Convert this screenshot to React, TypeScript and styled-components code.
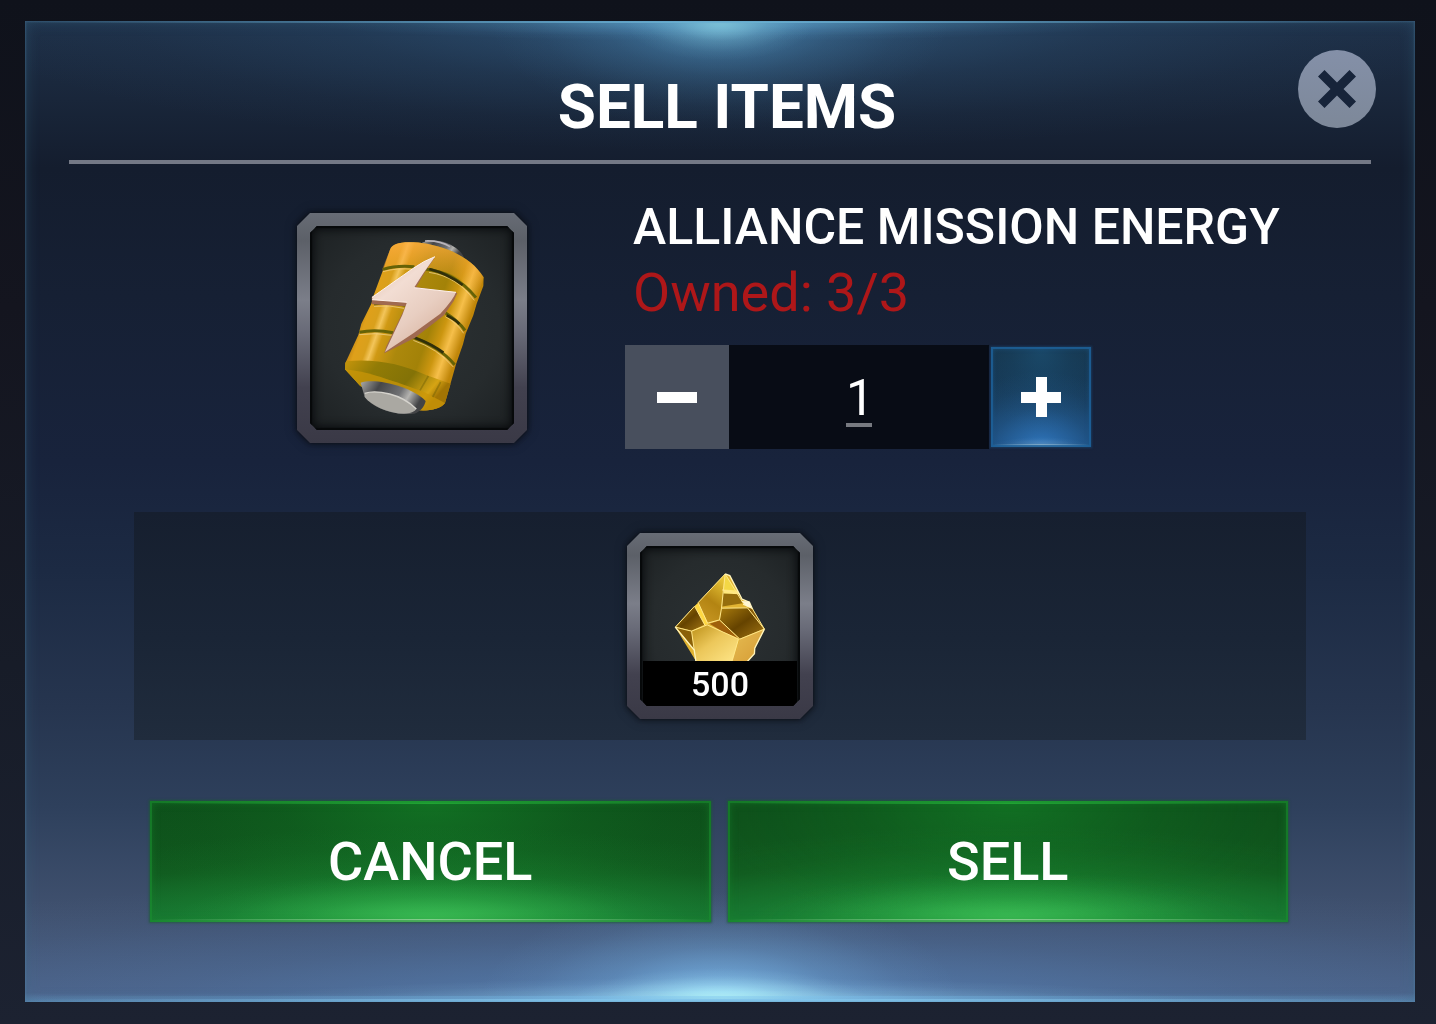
import React, { useState } from "react";
import styled, { createGlobalStyle } from "styled-components";

const OWNED = 3;
const UNIT_PRICE = 500;

const GlobalStyle = createGlobalStyle`
  *, *::before, *::after { box-sizing: border-box; }
  body {
    margin: 0;
    background: #161b27;
    color: #fff;
    font-family: Roboto, "Liberation Sans", Arial, sans-serif;
  }
  button, input { font: inherit; color: inherit; border: 0; padding: 0; margin: 0; }
  button { cursor: pointer; }
  h1, h2, p { margin: 0; }
`;

const glow = (width: number, height: number, edge: "0" | "100%", rgb: string, alpha: number) =>
  `radial-gradient(ellipse ${width}px ${height}px at 50% ${edge}, rgba(${rgb}, ${alpha}), rgba(${rgb}, ${alpha * 0.68}) 22%, rgba(${rgb}, ${alpha * 0.3}) 50%, rgba(${rgb}, ${alpha * 0.08}) 78%, rgba(${rgb}, 0))`;

const edgeLine = (height: number, edge: "0" | "100%", rgb: string, alpha: number) =>
  `linear-gradient(90deg, rgba(${rgb}, 0), rgba(${rgb}, ${alpha * 0.55}) 25%, rgba(${rgb}, ${alpha}) 50%, rgba(${rgb}, ${alpha * 0.55}) 75%, rgba(${rgb}, 0)) 0 ${edge} / 100% ${height}px no-repeat`;

const Page = styled.main`
  display: flex;
  min-height: 100vh;
  padding: 21px 21px 22px 25px;
  background: linear-gradient(180deg, #0f121b 0%, #14151f 30%, #171c28 65%, #1c2231 100%);
`;

const Dialog = styled.section`
  flex: 1;
  display: flex;
  flex-direction: column;
  background:
    ${edgeLine(2, "0", "120, 195, 230", 0.8)},
    ${edgeLine(3, "100%", "145, 215, 255", 0.9)},
    ${edgeLine(6, "100%", "130, 200, 250", 0.4)},
    ${glow(95, 40, "0", "150, 222, 235", 0.75)},
    ${glow(420, 20, "0", "110, 185, 230", 0.7)},
    ${glow(230, 110, "0", "90, 165, 215", 0.55)},
    ${glow(760, 130, "0", "60, 115, 160", 0.55)},
    ${glow(150, 34, "100%", "190, 255, 255", 1)},
    ${glow(480, 24, "100%", "160, 225, 255", 0.85)},
    ${glow(240, 110, "100%", "135, 205, 255", 0.75)},
    ${glow(1100, 130, "100%", "90, 145, 205", 0.6)},
    linear-gradient(0deg, rgba(120, 180, 225, 0.4), transparent 9px),
    linear-gradient(180deg, #1e3048 0%, #19263a 8%, #141d2e 15%, #162034 28%, #18233c 45%, #1c2a43 56%, #26354f 70%, #2e405c 80%, #40516f 91%, #4b6085 100%);
  box-shadow: inset 0 0 2px 1px rgba(90, 140, 175, 0.3), inset 0 0 14px rgba(58, 110, 140, 0.4);
`;

const Header = styled.header`
  display: grid;
  grid-template-columns: 92px 1fr 78px;
  align-items: center;
  padding: 29px 39px 32px;
`;

const Title = styled.h1`
  grid-column: 2;
  padding-top: 36px;
  font-size: 62px;
  line-height: 42px;
  font-weight: 700;
  text-align: center;
`;

const CloseButton = styled.button`
  display: grid;
  place-items: center;
  height: 78px;
  border-radius: 50%;
  background: linear-gradient(180deg, #8490a8, #7d8899);
`;

const Rule = styled.hr`
  width: calc(100% - 88px);
  height: 4px;
  margin: 0 44px;
  border: 0;
  background: #747986;
`;

const Item = styled.div`
  display: grid;
  grid-template-columns: 600fr 790fr;
  align-items: end;
  padding: 30px 0 63px;
`;

const ItemPicture = styled.div`
  display: flex;
  justify-content: flex-end;
  padding: 0 98px 6px 0;
`;

const ItemName = styled.h2`
  padding-left: 8px;
  font-size: 50px;
  line-height: 66px;
  font-weight: 500;
  white-space: nowrap;
`;

const Owned = styled.p`
  padding-left: 8px;
  margin-bottom: 19px;
  font-size: 54px;
  line-height: 66px;
  color: #ae1719;
`;

const octagon = (cut: number) => `
  clip-path: polygon(
    ${cut}px 0, calc(100% - ${cut}px) 0, 100% ${cut}px, 100% calc(100% - ${cut}px),
    calc(100% - ${cut}px) 100%, ${cut}px 100%, 0 calc(100% - ${cut}px), 0 ${cut}px
  );
`;

const FrameShadow = styled.div`
  filter: drop-shadow(0 0 2px #0b0e15) drop-shadow(0 0 5px rgba(8, 11, 18, 0.6));
`;

const Frame = styled.div<{ $size: number }>`
  width: ${(p) => p.$size}px;
  height: ${(p) => p.$size}px;
  padding: 13px;
  background: linear-gradient(180deg, #676c75 0%, #5c6068 12%, #7b7e89 38%, #686a77 52%, #42414f 76%, #3a3946 100%);
  ${octagon(13)}
`;

const FrameWell = styled.div`
  display: grid;
  height: 100%;
  background: radial-gradient(circle, #2b3133 0%, #262b2d 60%, #1c2022 100%);
  box-shadow: inset 0 0 10px 3px #07090b, inset 0 0 1px 2px #080a0c;
  ${octagon(7)}

  > * { grid-area: 1 / 1; }
`;

const Art = styled.svg`
  display: block;
  width: 100%;
  height: 100%;
`;

const Price = styled.span`
  align-self: end;
  height: 45px;
  margin: 0 3px;
  background: #000;
  font-size: 34px;
  font-weight: 500;
  line-height: 46px;
  text-align: center;
`;

const Stepper = styled.div`
  display: flex;
  align-items: center;
  height: 104px;
`;

const StepButton = styled.button<{ $active: boolean }>`
  display: grid;
  place-items: center;
  width: ${(p) => (p.$active ? 100 : 104)}px;
  height: ${(p) => (p.$active ? 100 : 104)}px;
  margin: 0 ${(p) => (p.$active ? 2 : 0)}px;
  background: ${(p) =>
    p.$active
      ? `${edgeLine(3, "100%", "170, 205, 225", 0.9)},
         ${glow(50, 10, "100%", "150, 190, 220", 0.7)},
         ${glow(96, 76, "100%", "50, 125, 200", 0.85)},
         ${glow(60, 90, "0", "30, 90, 130", 0.5)},
         linear-gradient(180deg, #16374f, #173c5c 60%, #1a4672)`
      : "#484f5d"};
  box-shadow: ${(p) =>
    p.$active ? "inset 0 0 0 2px rgba(30, 98, 155, 0.75), inset 0 0 5px 1px #1b5585, 0 0 2px 1px rgba(28, 80, 125, 0.5)" : "none"};
`;

const ValueBox = styled.label`
  display: grid;
  place-items: center;
  width: 260px;
  height: 104px;
  padding-top: 6px;
  background: #080c15;
`;

const ValueInput = styled.input`
  width: 26px;
  height: 54px;
  border-bottom: 4px solid #777a80;
  background: transparent;
  font-size: 50px;
  line-height: 50px;
  text-align: center;
  outline: none;
`;

const Reward = styled.div`
  display: flex;
  justify-content: center;
  margin: 0 109px 61px;
  padding: 21px 0;
  background: linear-gradient(180deg, #161f2f 0%, #1a2536 55%, #202c3d 100%);
`;

const Actions = styled.div`
  display: grid;
  grid-template-columns: 1fr 1fr;
  gap: 17px;
  padding: 0 127px 80px 125px;
`;

const ActionButton = styled.button`
  height: 121px;
  background:
    ${edgeLine(3, "100%", "175, 228, 178", 0.9)},
    ${edgeLine(3, "0", "38, 180, 58", 0.9)},
    ${glow(260, 50, "100%", "75, 205, 98", 0.7)},
    ${glow(440, 96, "100%", "36, 175, 68", 0.8)},
    ${glow(300, 140, "0", "20, 130, 40", 0.65)},
    linear-gradient(180deg, #0d4f1a 0%, #10581e 60%, #167030 100%);
  box-shadow: inset 0 0 0 2px rgba(26, 145, 48, 0.5), inset 0 0 8px 1px rgba(24, 130, 44, 0.6), 0 0 2px 1px rgba(26, 92, 48, 0.7);
  font-size: 54px;
  font-weight: 500;
  line-height: 120px;
`;

const Minus = () => (
  <svg width="40" height="40" viewBox="0 0 40 40" aria-hidden="true">
    <path d="M0 15h40v11H0z" fill="#fff" />
  </svg>
);

const Plus = () => (
  <svg width="40" height="40" viewBox="0 0 40 40" aria-hidden="true">
    <path d="M15 0h11v15h14v11H26v14H15V26H0V15h15z" fill="#fff" />
  </svg>
);

const Cross = () => (
  <svg width="40" height="40" viewBox="0 0 40 40" aria-hidden="true">
    <path d="M7.500 1 20 13.500 32.500 1 39 7.500 26.500 20 39 32.500 32.500 39 20 26.500 7.500 39 1 32.500 13.500 20 1 7.500z" fill="#17243a" />
  </svg>
);

const Battery = () => (
  <Art viewBox="90 77 612 612" role="img" aria-label="Energy battery">
    <defs>
      <linearGradient id="shell" gradientUnits="userSpaceOnUse" x1="255" y1="290" x2="555" y2="395">
        <stop offset="0" stopColor="#b67b12" />
        <stop offset=".08" stopColor="#dfa01a" />
        <stop offset=".17" stopColor="#d9a01c" />
        <stop offset=".22" stopColor="#f3c55a" />
        <stop offset=".28" stopColor="#d09914" />
        <stop offset=".45" stopColor="#ac880c" />
        <stop offset=".68" stopColor="#a38208" />
        <stop offset=".8" stopColor="#cc9610" />
        <stop offset=".89" stopColor="#f6bf4a" />
        <stop offset="1" stopColor="#c08609" />
      </linearGradient>
      <linearGradient id="warm" x1="0" y1="0" x2="0" y2="1">
        <stop offset="0" stopColor="#ffad42" stopOpacity=".75" />
        <stop offset="1" stopColor="#ec9b25" stopOpacity="0" />
      </linearGradient>
      <linearGradient id="bevel" x1="0" y1="0" x2="1" y2=".4">
        <stop offset="0" stopColor="#c6950b" />
        <stop offset=".3" stopColor="#917b06" />
        <stop offset=".65" stopColor="#837207" />
        <stop offset=".9" stopColor="#d6a414" />
        <stop offset="1" stopColor="#a27404" />
      </linearGradient>
      <linearGradient id="steel" x1="0" y1="0" x2="1" y2=".3">
        <stop offset="0" stopColor="#aaa9a7" />
        <stop offset=".3" stopColor="#454648" />
        <stop offset=".65" stopColor="#707174" />
        <stop offset=".8" stopColor="#b4b3b0" />
        <stop offset="1" stopColor="#434446" />
      </linearGradient>
      <linearGradient id="bolt" x1="0" y1="0" x2=".7" y2="1">
        <stop offset="0" stopColor="#dfb9a5" />
        <stop offset=".35" stopColor="#f2ddd3" />
        <stop offset=".65" stopColor="#e8cec1" />
        <stop offset="1" stopColor="#d6b09b" />
      </linearGradient>
    </defs>
    <path d="M425 128C445 116 487 119 512 133 536 146 548 160 552 172L470 150z" fill="url(#steel)" />
    <path d="M435 122Q480 120 510 139" fill="none" stroke="#b8b4ba" strokeWidth="5" />
    <path d="M330 148C337 130 360 124 401 126 476 130 571 164 611 231L610 257 590 310 580 345 557 400 549 432 528 492 520 520 495 608C485 624 458 631 416 630L241 557 195 507 196 488 235 404 244 370 274 310 282 282 306 217z" fill="url(#shell)" />
    <path d="M330 148C337 130 360 124 401 126 476 130 571 164 611 231L595 282C548 225 484 204 416 202L306 208z" fill="url(#warm)" />
    <path d="M200 482C290 475 365 490 440 525L512 550 495 608C480 625 453 632 416 630L241 557 195 507 196 488z" fill="url(#bevel)" />
    <path d="M195 507Q238 511 289 526T432 575L495 608C478 628 449 632 416 630L241 557z" fill="#c99508" opacity=".75" />
    <path d="M420 570 445 527M458 590 482 545" fill="none" stroke="#675b05" strokeWidth="5" opacity=".4" />
    <path d="M309 207Q350 194 403 199M434 206C500 212 549 244 588 292M282 311Q330 304 376 315M497 338Q536 363 555 390M238 396Q283 386 340 397M393 409Q477 438 524 493" fill="none" stroke="#656207" strokeWidth="9" />
    <path d="M309 214Q350 202 400 207M447 216C507 225 547 253 583 300M282 318Q330 313 372 324M496 349Q529 366 551 399M238 403Q285 396 336 405M400 420Q473 445 520 500" fill="none" stroke="#efce82" strokeWidth="3" opacity=".8" />
    <path d="M448 206Q503 220 548 254M500 345Q525 357 538 371M405 412Q458 432 490 457" fill="none" stroke="#302f0a" strokeWidth="8" />
    <path d="M242 547C287 532 395 558 437 602 433 620 420 635 402 640 350 647 280 625 254 590z" fill="url(#steel)" />
    <path d="M254 579Q282 569 329 581T409 626Q402 638 378 639C327 641 276 618 254 590z" fill="#aaa8a2" />
    <path d="M254 579Q282 569 329 581T409 626" fill="none" stroke="#d5d3cd" strokeWidth="4" />
    <path d="M465 171 438 210 409 260 532 278 521 302 492 345 405 412 313 459 318 440 377 318 276 312 275 291z" fill="#a06a50" />
    <path d="M465 169Q432 181 398 205L276 291 278 298 381 306 367 344 315 455 400 399 481 340Q520 299 528 276L402 262 431 217z" fill="url(#bolt)" />
    <path d="M276 291 398 205Q432 181 465 169M402 262 528 276M276 298 381 306" fill="none" stroke="#fff2eb" strokeWidth="3" />
  </Art>
);

const GoldOre = () => (
  <Art viewBox="75 77 481 481" role="img" aria-label="Gold">
    <defs>
      <linearGradient id="oreDark" x1="0" y1="0" x2="1" y2="1">
        <stop offset="0" stopColor="#a87b0d" />
        <stop offset=".5" stopColor="#654300" />
        <stop offset="1" stopColor="#a37614" />
      </linearGradient>
      <linearGradient id="oreMid" x1=".7" y1="0" x2=".3" y2="1">
        <stop offset="0" stopColor="#e9c637" />
        <stop offset=".55" stopColor="#b38412" />
        <stop offset="1" stopColor="#c79622" />
      </linearGradient>
      <linearGradient id="oreLight" x1="0" y1="0" x2="1" y2="1">
        <stop offset="0" stopColor="#bc9018" />
        <stop offset=".45" stopColor="#ecc75a" />
        <stop offset="1" stopColor="#ffe78a" />
      </linearGradient>
      <linearGradient id="oreSide" x1="0" y1="0" x2="1" y2="1">
        <stop offset="0" stopColor="#e6bd52" />
        <stop offset="1" stopColor="#d59b35" />
      </linearGradient>
    </defs>
    <path d="M331 161 345 166 382 237 404 246 412 264 449 327 420 384 419 401 395 427 243 423 181 321 239 258 250 247z" fill="#e1b332" />
    <path d="M331 161 320 264 314 299 278 309 250 247z" fill="url(#oreMid)" />
    <path d="M331 161 373 222 325 208z" fill="#f3d745" />
    <path d="M325 210 373 223 384 249 322 259z" fill="#956d0d" />
    <path d="M326 208 367 211 374 222 326 220z" fill="#ffe97c" />
    <path d="M239 258 270 313 230 332 184 320z" fill="url(#oreDark)" />
    <path d="M184 321 230 333 238 388z" fill="#8a6009" />
    <path d="M319 264 398 263 449 325 375 356 315 300z" fill="url(#oreDark)" />
    <path d="M398 263 449 325 435 304 412 264z" fill="#875b08" />
    <path d="M277 316 371 357 352 426 243 423 230 334z" fill="url(#oreLight)" />
    <path d="M284 311 314 301 371 354 323 334z" fill="#9f600b" />
    <path d="M375 358 449 327 420 384 419 401 395 427 351 426z" fill="url(#oreSide)" />
    <path d="M240 257 250 249 280 310 270 315z" fill="#ffd842" />
    <path d="M331 161 250 247 278 309 314 299 320 264 331 161 384 247 412 264 449 327 375 357 314 299M320 264 398 263 449 327M181 321 230 333 277 314 371 357 351 426M230 333 238 390M181 321 239 258 270 315M322 209 370 221" fill="none" stroke="#ffe78b" strokeWidth="3" strokeLinejoin="round" />
    <path d="M331 161 345 166 382 237 404 246 412 264 385 252M181 321 238 390 243 423M449 327 420 384 419 401 395 427" fill="none" stroke="#fff4bc" strokeWidth="4" />
    <path d="M380 242 404 244 410 263 396 258z" fill="#fff6d5" />
  </Art>
);

export default function App() {
  const [count, setCount] = useState(1);
  const [open, setOpen] = useState(true);
  const close = () => setOpen(false);
  const change = (next: number) => setCount(Math.min(OWNED, Math.max(1, next || 1)));

  return (
    <>
      <GlobalStyle />
      <Page>
        {open && (
          <Dialog role="dialog" aria-labelledby="dialog-title">
            <Header>
              <Title id="dialog-title">SELL ITEMS</Title>
              <CloseButton type="button" aria-label="Close" onClick={close}>
                <Cross />
              </CloseButton>
            </Header>
            <Rule />
            <Item>
              <ItemPicture>
                <FrameShadow>
                  <Frame $size={230}>
                    <FrameWell>
                      <Battery />
                    </FrameWell>
                  </Frame>
                </FrameShadow>
              </ItemPicture>
              <div>
                <ItemName>ALLIANCE MISSION ENERGY</ItemName>
                <Owned>Owned: 3/3</Owned>
                <Stepper>
                  <StepButton type="button" aria-label="Sell fewer" $active={count > 1} onClick={() => change(count - 1)}>
                    <Minus />
                  </StepButton>
                  <ValueBox>
                    <ValueInput
                      aria-label="Quantity"
                      inputMode="numeric"
                      value={count}
                      onChange={(e) => change(Number(e.target.value))}
                    />
                  </ValueBox>
                  <StepButton type="button" aria-label="Sell more" $active={count < OWNED} onClick={() => change(count + 1)}>
                    <Plus />
                  </StepButton>
                </Stepper>
              </div>
            </Item>
            <Reward>
              <FrameShadow>
                <Frame $size={186}>
                  <FrameWell>
                    <GoldOre />
                    <Price>{UNIT_PRICE * count}</Price>
                  </FrameWell>
                </Frame>
              </FrameShadow>
            </Reward>
            <Actions>
              <ActionButton type="button" onClick={close}>CANCEL</ActionButton>
              <ActionButton type="button" onClick={close}>SELL</ActionButton>
            </Actions>
          </Dialog>
        )}
      </Page>
    </>
  );
}
